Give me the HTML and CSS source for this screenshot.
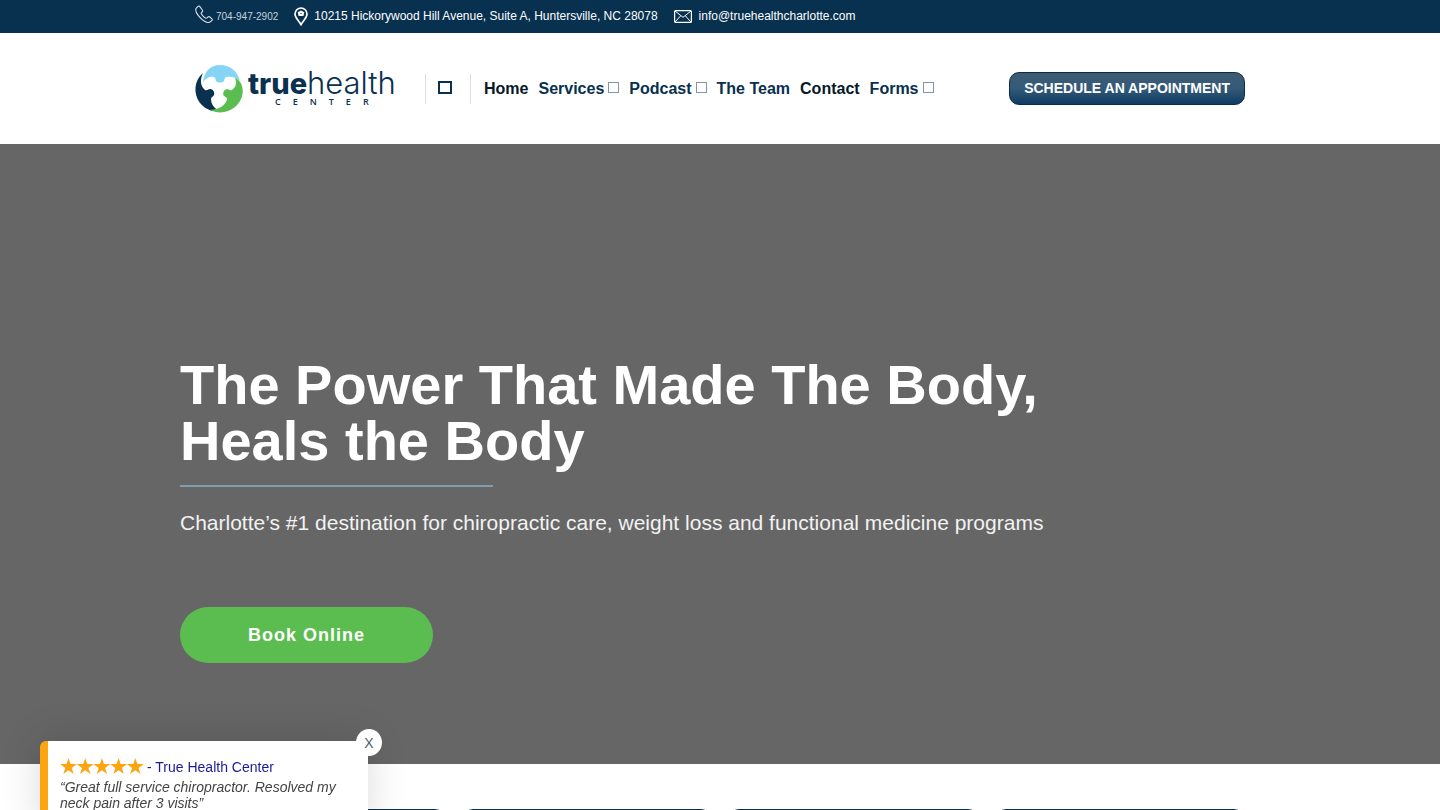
FILE: index.html
```html
<!DOCTYPE html>
<html lang="en">
<head>
<meta charset="utf-8">
<meta name="viewport" content="width=device-width, initial-scale=1">
<title>True Health Center</title>
<link rel="stylesheet" href="styles.css">
</head>
<body>
<div class="topbar">
  <div class="container topbar-inner">
    <a class="phone" href="tel:7049472902">
      <svg width="18" height="19" viewBox="0 0 19 19" fill="none" stroke="currentColor" stroke-width="1.1" stroke-linejoin="round"><path d="M3.2 1 1.4 2.8C.2 4.2.8 7 3.4 10.400c2.400 3.100 5.600 6.200 8.900 7.300 1.800.6 3.300.3 4.200-.6l1.500-1.500c.5-.5.4-1.100-.1-1.500l-2.700-2.200c-.5-.4-1.100-.3-1.500.1l-1.200 1.200c-.4.4-.9.4-1.400.1-1.800-1.100-3.400-2.800-4.500-4.600-.3-.5-.2-.9.200-1.300l1-1c.4-.4.4-1 .1-1.400L5.100 1.200C4.600.5 3.800.4 3.200 1Z"/></svg>
      <span>704-947-2902</span>
    </a>
    <a class="contact address" href="#map">
      <svg width="14" height="19" viewBox="0 0 14 19" fill="none" stroke="currentColor"><path stroke-width="1.700" d="M7 17.500C5.500 14.500 1 11 1 7a6 6 0 0 1 12 0c0 4-4.500 7.500-6 10.500Z"/><path fill="currentColor" stroke="none" d="m7 3.500 3.300 1.800-.9 3.700H4.600l-.9-3.700Z"/><circle cx="7" cy="6.400" r=".7" fill="#08304f" stroke="none"/></svg>
      <span>10215 Hickorywood Hill Avenue, Suite A, Huntersville, NC 28078</span>
    </a>
    <a class="contact email" href="mailto:info@truehealthcharlotte.com">
      <svg width="18" height="13" viewBox="0 0 18 13" fill="none" stroke="currentColor"><rect x=".6" y=".6" width="16.800" height="11.800" rx="1" stroke-width="1.200"/><path d="m1 1 8 6.300L17 1M1 12l5.500-6M17 12l-5.500-6"/></svg>
      <span>info@truehealthcharlotte.com</span>
    </a>
  </div>
</div>

<header class="header">
  <div class="container header-inner">
    <a class="logo" href="#home" aria-label="True Health Center">
      <svg width="202" height="48" viewBox="0 0 202 48">
        <path fill="#86d4f5" d="M8 17C9 7 15 0 25 0c9 0 17 5 20 16-4-4-9-5-14-4-2 1-1 2-2 4-2 2-6 2-8 0-1-2 0-3-2-4-4-1-8 1-11 5Z"/>
        <path fill="#0a3150" d="M8 8C-1 15-2 29 5 38c5 6 12 9 19 8-5-3-8-7-8-12 0-2 2-2 3-4 1-3-1-6-4-6-2 0-3 2-5 1C5 21 5 14 8 8Z"/>
        <path fill="#5bbd50" d="M40 13c2 5 1 9-3 12-2 1-3-1-5-1-3 1-5 4-3 7 1 1 3 1 3 3-1 6-7 10-17 11 8 4 18 3 25-3 7-6 9-14 7-21-1-4-4-7-7-8Z"/>
        <text class="logo-true" x="53" y="29">true</text>
        <text class="logo-health" x="112" y="29">health</text>
        <text class="logo-center" x="80" y="40">CENTER</text>
      </svg>
    </a>
    <div class="search"><button type="button" aria-label="Search"><span class="box"></span></button></div>
    <nav class="nav">
      <a class="current" href="#home">Home</a>
      <a href="#services">Services<span class="box small"></span></a>
      <a href="#podcast">Podcast<span class="box small"></span></a>
      <a href="#team">The Team</a>
      <a class="current" href="#contact">Contact</a>
      <a href="#forms">Forms<span class="box small"></span></a>
    </nav>
    <a class="schedule" href="#appointment">SCHEDULE AN APPOINTMENT</a>
  </div>
</header>

<main>
  <section class="hero">
    <div class="hero-inner">
      <h1>The Power That Made The Body,<br>Heals the Body</h1>
      <hr class="rule">
      <p>Charlotte’s #1 destination for chiropractic care, weight loss and functional medicine programs</p>
      <a class="book" href="#book">Book Online</a>
    </div>
  </section>
  <section class="cards">
    <div class="card"></div><div class="card"></div><div class="card"></div><div class="card"></div>
  </section>
</main>

<aside class="review">
  <div class="review-head">
    <svg width="84" height="17" viewBox="0 0 84 17" fill="#fca510" role="img" aria-label="5 stars"><defs><path id="star" d="m8.500 0 2 6.100H17l-5.300 3.800 2 6.100-5.200-3.700L3.300 16l2-6.100L0 6.100h6.500Z"/></defs><use href="#star"/><use href="#star" x="16.700"/><use href="#star" x="33.400"/><use href="#star" x="50.100"/><use href="#star" x="66.800"/></svg>
    <a href="#reviews">- True Health Center</a>
  </div>
  <p>“Great full service chiropractor. Resolved my neck pain after 3 visits”</p>
  <button class="close" type="button" aria-label="Close">X</button>
</aside>
</body>
</html>
```
FILE: styles.css
```css
* { box-sizing: border-box; }
body {
  margin: 0;
  background: #fff;
  color: #08304f;
  font-family: "Liberation Sans", Arial, sans-serif;
}
a { color: inherit; text-decoration: none; }
svg { display: block; flex: none; }
.container {
  max-width: 1050px;
  margin: 0 auto;
  display: flex;
  align-items: center;
}

.topbar { background: #08304f; color: #fff; }
.topbar-inner { height: 33px; }
.topbar a { display: flex; align-items: center; white-space: nowrap; }
.phone { gap: 3px; margin-right: 16px; font-size: 10px; color: #c4d3dd; }
.phone svg { margin-bottom: 4px; color: #dfe9ef; }
.contact { gap: 6px; font-size: 12px; }
.contact span { padding-bottom: 2px; }
.address { margin-right: 16px; }
.email { gap: 7px; }

.header-inner { height: 111px; }
.logo { margin-right: 28px; }
.logo svg { overflow: visible; }
.logo-true { font: 800 29px Inter, sans-serif; fill: #0a3150; }
.logo-health { font: 300 31px Inter, sans-serif; fill: #0a3150; }
.logo-center { font: 600 9px "Open Sans", sans-serif; letter-spacing: 12px; fill: #0a3150; }
.search {
  height: 30px;
  width: 46px;
  margin-right: 13px;
  border: solid #ddd;
  border-width: 0 1px;
  display: grid;
  place-items: center;
}
.search button { border: 0; padding: 0 0 2px; margin-right: 6px; background: none; color: #08304f; }
.box { display: block; width: 14px; height: 13px; border: 2px solid currentColor; }
.nav { display: flex; gap: 10px; font-size: 16px; font-weight: 700; line-height: 20px; white-space: nowrap; }
.nav a { display: flex; align-items: center; }
.nav .current { color: #06192b; }
.box.small { width: 11px; height: 11px; margin: 0 0 2px 4px; border: 1px solid #8795a2; }
.schedule {
  margin-left: auto;
  padding: 0 14px;
  border: 1px solid #0b2c47;
  border-radius: 10px;
  background: linear-gradient(#3f5b74, #335a78 50%, #103c62);
  color: #fff;
  font-size: 14px;
  font-weight: 700;
  line-height: 31px;
  white-space: nowrap;
}

.hero { min-height: 620px; background: #666; color: #fff; }
.hero-inner { max-width: 1080px; margin: 0 auto; padding: 213px 0 101px; }
.hero h1 { margin: 0; font-size: 56px; line-height: 56px; }
.rule { width: 313px; height: 2px; margin: 16px 0 24px; border: 0; background: #7f9dae; }
.hero p { margin: 0; color: #f2f2f2; font-size: 21px; line-height: 24px; }
.book {
  display: block;
  width: 253px;
  margin-top: 72px;
  border-radius: 28px;
  background: #5bbd50;
  font-size: 18px;
  font-weight: 700;
  line-height: 56px;
  letter-spacing: 1px;
  text-align: center;
}

.cards {
  max-width: 1048px;
  margin: 0 auto;
  padding-top: 45px;
  display: grid;
  grid-template-columns: repeat(4, 1fr);
  gap: 18px;
}
.card { height: 160px; border-radius: 10px; background: #08304f; }

.review {
  position: fixed;
  left: 40px;
  bottom: -17px;
  width: 328px;
  padding: 16px 20px 16px 12px;
  border-left: 8px solid #fca510;
  border-radius: 6px 0 0 6px;
  background: #fff;
  box-shadow: 0 0 40px rgba(0, 0, 0, .15);
}
.review-head { display: flex; align-items: center; gap: 3px; height: 20px; font-size: 14px; color: #1a1a96; }
.review-head svg { margin-bottom: 2px; }
.review p { margin: 2px 0 0; color: #444; font-size: 14px; font-style: italic; line-height: 16px; }
.close {
  position: absolute;
  top: -12px;
  right: -14px;
  width: 26px;
  height: 27px;
  padding: 0;
  border: 0;
  border-radius: 50%;
  background: #fff;
  color: #51606b;
  font: 14px "Liberation Sans", sans-serif;
}
```
